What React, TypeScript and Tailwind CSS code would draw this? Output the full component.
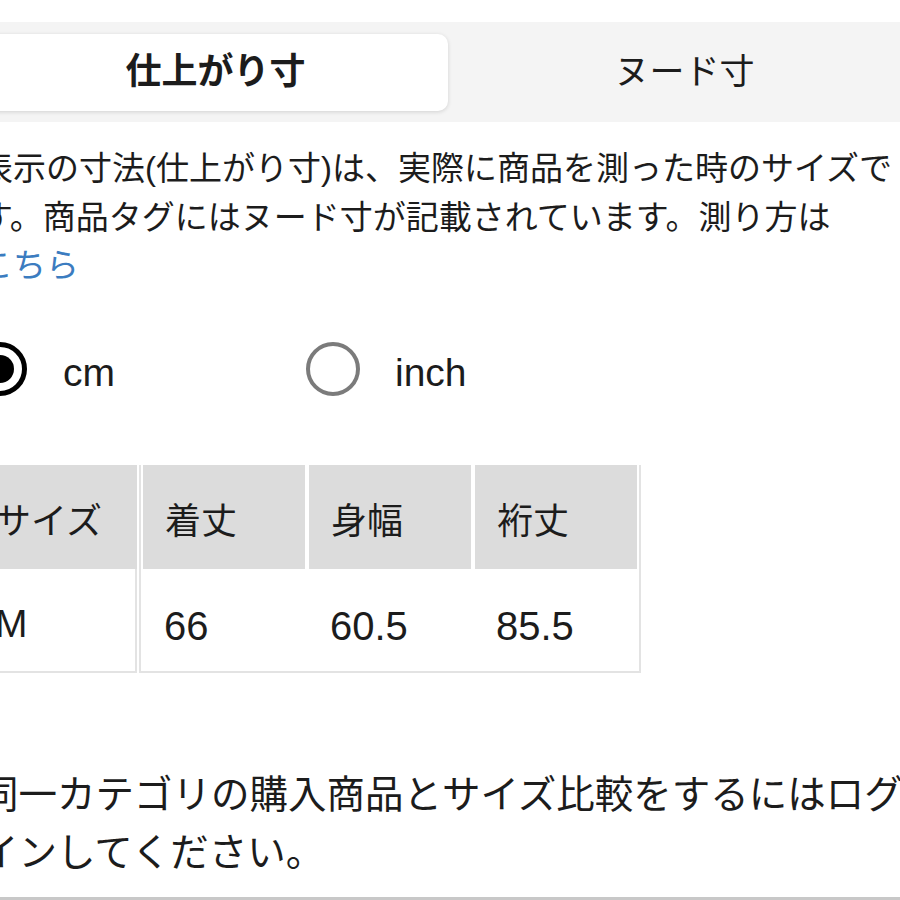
const sizeColumns = [
  { label: '着丈', value: '66' },
  { label: '身幅', value: '60.5' },
  { label: '裄丈', value: '85.5' },
];

export default function App() {
  return (
    <div className="w-[900px] h-[900px] overflow-hidden bg-white text-[#1c1c1c] font-['Liberation_Sans','Noto_Sans_CJK_JP',sans-serif]">
      <div className="-ml-[28px] w-[956px] pt-[22px]">
        {/* Tabs */}
        <div className="h-[100px] bg-[#f4f4f4] flex items-center gap-[4px] px-[11px]">
          <div className="flex-1 h-[77px] bg-white rounded-[10px] shadow-[0_1px_4px_rgba(0,0,0,0.14)] flex items-center justify-center text-[36px] font-bold">
            仕上がり寸
          </div>
          <div className="flex-1 h-[77px] flex items-center justify-center text-[35px]">
            ヌード寸
          </div>
        </div>

        {/* Description */}
        <p className="mt-[23px] pl-[8px] text-[33px] leading-[48.5px] whitespace-nowrap">
          表示の寸法(仕上がり寸)は、実際に商品を測った時のサイズで
          <br />
          す。商品タグにはヌード寸が記載されています。測り方は
          <br />
          <span className="text-[#3b7cc0]">こちら</span>
        </p>

        {/* Unit radio */}
        <div className="mt-[51px] pl-[1px] flex items-center">
          <div className="w-[333px] flex items-center gap-[36px]">
            <span className="w-[54px] h-[54px] rounded-full border-[5px] border-black flex items-center justify-center">
              <span className="w-[28px] h-[28px] rounded-full bg-black" />
            </span>
            <span className="pt-[7px] text-[39px] leading-none">cm</span>
          </div>
          <div className="flex items-center gap-[35px]">
            <span className="w-[54px] h-[54px] rounded-full border-[4px] border-[#7b7b7b]" />
            <span className="pt-[7px] text-[39px] leading-none">inch</span>
          </div>
        </div>

        {/* Size table */}
        <div className="mt-[69px] flex items-start gap-[2px]">
          <div className="w-[165px] flex flex-col">
            <div className="h-[104px] bg-[#dcdcdc] flex items-center pl-[23px] pt-[10px] text-[36px]">サイズ</div>
            <div className="h-[104px] border-r-2 border-b-2 border-[#e3e3e3] flex items-center pl-[23px] pt-[10px] text-[39px]">M</div>
          </div>
          <div className="w-[502px] border-2 border-t-0 border-[#e3e3e3] px-[2px]">
            <div className="grid grid-cols-3 gap-x-[4px]">
              {sizeColumns.map((c) => (
                <div key={c.label} className="h-[104px] bg-[#dcdcdc] flex items-center pl-[22px] pt-[11px] text-[36px]">
                  {c.label}
                </div>
              ))}
              {sizeColumns.map((c) => (
                <div key={c.value} className="h-[102px] flex items-center pl-[21px] pt-[12px] text-[40px]">
                  {c.value}
                </div>
              ))}
            </div>
          </div>
        </div>

        {/* Login note */}
        <p className="mt-[93px] pl-[8px] text-[38.5px] leading-[58px] whitespace-nowrap">
          同一カテゴリの購入商品とサイズ比較をするにはログ
          <br />
          インしてください。
        </p>

        <div className="mt-[15px] h-[3px] bg-[#c8c8c8]" />
      </div>
    </div>
  );
}
